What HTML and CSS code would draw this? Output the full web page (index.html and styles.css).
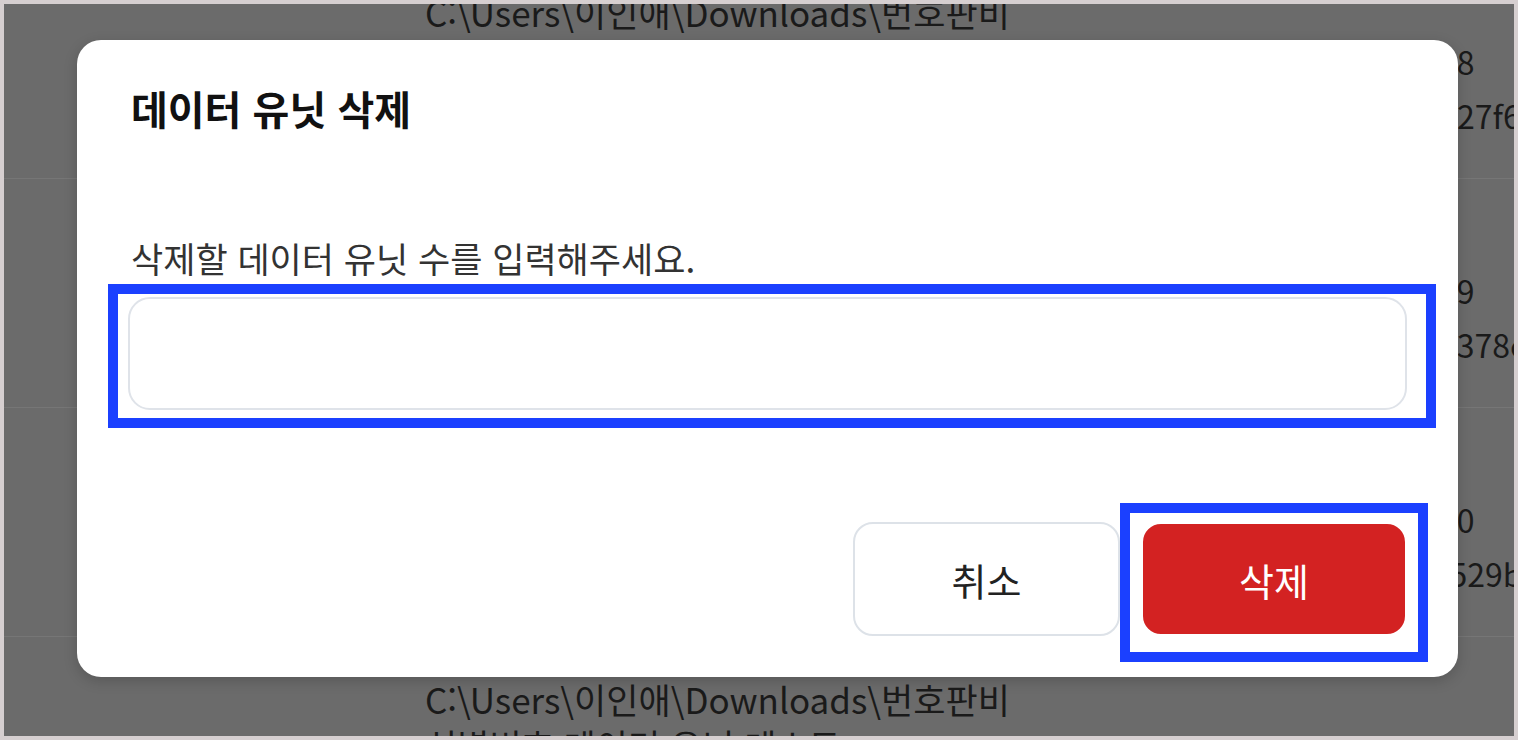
FILE: index.html
```html
<!DOCTYPE html>
<html lang="ko">
<head>
  <meta charset="UTF-8">
  <title>데이터 유닛 삭제</title>
  <link rel="stylesheet" href="styles.css">
</head>
<body>

  <div class="screen">

    <div class="table">
      <div class="row">
        <div class="cell-path">
          <div>C:\Users\이인애\Downloads\번호판비</div>
          <div>식별번호 데이터 유닛</div>
        </div>
        <div class="cell-info">
          <div>18</div>
          <div>a27f6c1</div>
        </div>
      </div>
      <div class="row">
        <div class="cell-path">
          <div>C:\Users\이인애\Downloads\번호판비</div>
          <div>식별번호 데이터 유닛</div>
        </div>
        <div class="cell-info">
          <div>19</div>
          <div>e378e0d</div>
        </div>
      </div>
      <div class="row">
        <div class="cell-path">
          <div>C:\Users\이인애\Downloads\번호판비</div>
          <div>식별번호 데이터 유닛</div>
        </div>
        <div class="cell-info">
          <div>20</div>
          <div>f529b4a</div>
        </div>
      </div>
      <div class="row">
        <div class="cell-path">
          <div>C:\Users\이인애\Downloads\번호판비</div>
          <div>식별번호 데이터 유닛 테스트</div>
        </div>
        <div class="cell-info">
          <div>21</div>
          <div>b81d3e2</div>
        </div>
      </div>
    </div>

    <div class="modal">
      <h2 class="modal-title">데이터 유닛 삭제</h2>
      <div class="modal-body">
        <label class="modal-label" for="unitCount">삭제할 데이터 유닛 수를 입력해주세요.</label>
        <input class="modal-input" id="unitCount" type="text">
      </div>
      <div class="modal-footer">
        <button class="btn btn-cancel">취소</button>
        <button class="btn btn-delete">삭제</button>
      </div>
    </div>

    <!-- 강조 표시 -->
    <div class="mark mark-input"></div>
    <div class="mark mark-button"></div>

  </div>

</body>
</html>
```

FILE: styles.css
```css
body {
  margin: 0;
  padding: 4px;
  background-color: #d6cfd0;
  font-family: "Noto Sans CJK KR", "Noto Sans", sans-serif;
}

.screen {
  position: relative;
  height: 732px;
  overflow: hidden;
  background-color: #6b6b6b;
}

/* 뒤쪽 표 */
.table {
  margin-top: -54px;
  display: flex;
  flex-direction: column;
}

.row {
  height: 228px;
  border-bottom: 1px solid #767676;
  display: flex;
  color: #1a1a1a;
}

.cell-path {
  flex-shrink: 0;
  width: 1021px;
  padding: 39px 0 0 421px;
  box-sizing: border-box;
  font-size: 35px;
  line-height: 46px;
  white-space: nowrap;
}

.cell-info {
  flex-shrink: 0;
  padding-top: 84px;
  padding-left: 414px;
  font-size: 32px;
  line-height: 54px;
  white-space: nowrap;
}

/* 모달 */
.modal {
  position: absolute;
  left: 73px;
  top: 36px;
  width: 1381px;
  height: 637px;
  box-sizing: border-box;
  padding: 43px 51px 41px;
  background-color: white;
  border-radius: 24px;
  box-shadow: 0 4px 14px rgba(0, 0, 0, 0.18);
  display: flex;
  flex-direction: column;
}

.modal-title {
  margin: 0;
  padding-left: 3px;
  font-size: 40px;
  line-height: 50px;
  font-weight: bold;
  color: #111;
}

.modal-body {
  margin-top: 103px;
  display: flex;
  flex-direction: column;
  gap: 18px;
}

.modal-label {
  padding-left: 3px;
  font-size: 35px;
  line-height: 43px;
  color: #333;
}

.modal-input {
  height: 113px;
  box-sizing: border-box;
  border: 2px solid #dfe3e9;
  border-radius: 22px;
  font-size: 30px;
  padding: 0 24px;
  outline: none;
}

.modal-footer {
  margin-top: 112px;
  display: flex;
  justify-content: flex-end;
  gap: 21px;
}

.btn {
  width: 267px;
  height: 114px;
  box-sizing: border-box;
  border-radius: 20px;
  font-family: inherit;
  font-size: 38px;
  cursor: pointer;
}

.btn-cancel {
  background-color: white;
  border: 2px solid #dde2e8;
  color: #222;
}

.btn-delete {
  width: 266px;
  background-color: #d32222;
  border: 2px solid white;
  color: white;
}

/* 파란 강조 테두리 */
.mark {
  position: absolute;
  border: 10px solid #1b40ff;
  box-sizing: border-box;
}

.mark-input {
  left: 104px;
  top: 280px;
  width: 1328px;
  height: 144px;
}

.mark-button {
  left: 1116px;
  top: 499px;
  width: 308px;
  height: 159px;
}
```
